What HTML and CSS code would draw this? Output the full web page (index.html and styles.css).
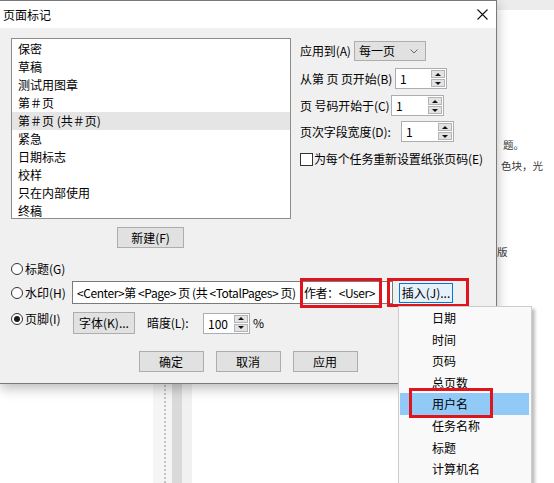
FILE: index.html
```html
<!DOCTYPE html>
<html lang="zh-CN">
<head>
<meta charset="utf-8">
<title>页面标记</title>
<link rel="stylesheet" href="styles.css">
</head>
<body>
<div class="desk">
  <div class="doc">
    <div class="doc-gap"></div>
    <div class="ruler"><span class="ru-a"></span><span class="ru-dots"></span><span class="ru-b"></span><span class="ru-c"></span><span class="ru-d"></span></div>
    <div class="doc-fill"></div>
    <div class="doc-edge">
      <div class="doc-band"></div>
      <p class="doc-line l1">题。</p>
      <p class="doc-line l2">色块，光</p>
      <p class="doc-line l3">版</p>
    </div>
  </div>

  <section class="dialog">
    <header class="titlebar">
      <h1 class="title">页面标记</h1>
      <svg class="close" width="11" height="11" viewBox="0 0 11 11"><path d="M0.5 0.5L10.5 10.5M10.5 0.5L0.5 10.5" stroke="#111" stroke-width="1.1" fill="none"/></svg>
    </header>
    <div class="dlg-body">
      <div class="upper">
        <div class="list-col">
          <ul class="listbox">
            <li>保密</li>
            <li>草稿</li>
            <li>测试用图章</li>
            <li>第＃页</li>
            <li class="sel">第＃页 (共＃页)</li>
            <li>紧急</li>
            <li>日期标志</li>
            <li>校样</li>
            <li>只在内部使用</li>
            <li>终稿</li>
          </ul>
          <button class="btn btn-new">新建(F)</button>
        </div>
        <div class="settings">
          <div class="field f-apply">
            <span class="lab">应用到(A)</span>
            <div class="combo"><span>每一页</span><svg width="8" height="5" viewBox="0 0 8 5"><path d="M0.5 0.5L4 4L7.5 0.5" stroke="#666" fill="none"/></svg></div>
          </div>
          <div class="field f-from">
            <span class="lab">从第 页 页开始(B)</span>
            <div class="spin"><span class="spin-val">1</span><span class="spin-btns"><i class="up"></i><i class="down"></i></span></div>
          </div>
          <div class="field f-num">
            <span class="lab">页 号码开始于(C)</span>
            <div class="spin"><span class="spin-val">1</span><span class="spin-btns"><i class="up"></i><i class="down"></i></span></div>
          </div>
          <div class="field f-width">
            <span class="lab">页次字段宽度(D):</span>
            <div class="spin"><span class="spin-val">1</span><span class="spin-btns"><i class="up"></i><i class="down"></i></span></div>
          </div>
          <label class="check-row"><span class="checkbox"></span>为每个任务重新设置纸张页码(E)</label>
        </div>
      </div>

      <div class="mode">
        <div class="mode-row m-title">
          <span class="radio-lab"><i class="radio"></i>标题(G)</span>
        </div>
        <div class="mode-row m-mark">
          <span class="radio-lab"><i class="radio"></i>水印(H)</span>
          <div class="textbox">&lt;Center&gt;第 &lt;Page&gt; 页 (共 &lt;TotalPages&gt; 页) <span class="hl hl-text">作者：&lt;User&gt;</span></div>
          <button class="btn btn-insert hl">插入(J)...</button>
        </div>
        <div class="mode-row m-foot">
          <span class="radio-lab"><i class="radio on"></i>页脚(I)</span>
          <button class="btn btn-font">字体(K)...</button>
          <span class="lab lab-dark">暗度(L):</span>
          <div class="spin spin-dark"><span class="spin-val">100</span><span class="spin-btns"><i class="up"></i><i class="down"></i></span></div>
          <span class="pct">%</span>
        </div>
      </div>

      <div class="actions">
        <button class="btn">确定</button>
        <button class="btn">取消</button>
        <button class="btn">应用</button>
      </div>
    </div>
  </section>

  <ul class="menu">
    <li>日期</li>
    <li>时间</li>
    <li>页码</li>
    <li>总页数</li>
    <li class="hot hl">用户名</li>
    <li>任务名称</li>
    <li>标题</li>
    <li>计算机名</li>
  </ul>
</div>
</body>
</html>
```

FILE: styles.css
```css
* { box-sizing: border-box; margin: 0; padding: 0; }

html, body {
  width: 554px;
  height: 483px;
  overflow: hidden;
}

body {
  font-family: "Noto Sans CJK SC", "Noto Sans", sans-serif;
  font-size: 12px;
  line-height: 18px;
  color: #000;
  background: #fff;
}

.desk {
  position: relative;
  width: 554px;
  height: 483px;
  overflow: hidden;
}

/* ---------- background document ---------- */
.doc {
  position: absolute;
  inset: 0;
  display: flex;
}
.doc-gap { width: 153px; }
.ruler { width: 39px; display: flex; }
.ru-a { width: 11px; background: #f5f5f5; }
.ru-dots { width: 2px; background: #f5f5f5; border-left: 2px dotted #c4c4c4; }
.ru-b { width: 6px; background: #f5f5f5; }
.ru-c { width: 10px; background: #dadada; }
.ru-d { width: 10px; background: #f1f1f1; }
.doc-fill { flex: 1; }
.doc-edge {
  width: 57px;
  font-size: 10.5px;
  color: #3a3a3a;
}
.doc-band { height: 10px; background: #ececec; }
.doc-line { line-height: 16px; white-space: nowrap; }
.l1 { margin-top: 127px; padding-left: 6px; }
.l2 { margin-top: 5px; padding-left: 4px; }
.l3 { margin-top: 70px; padding-left: 0; }

/* ---------- dialog ---------- */
.dialog {
  position: absolute;
  left: 0;
  top: 0;
  width: 497px;
  height: 384px;
  border: 1px solid #7a7a7a;
  border-left: 0;
  background: #f0f0f0;
  box-shadow: 0 4px 12px rgba(0, 0, 0, 0.28);
  display: flex;
  flex-direction: column;
}

.titlebar {
  height: 27px;
  background: #fff;
  display: flex;
  align-items: center;
  justify-content: space-between;
  padding: 0 8px 0 3px;
}
.title { font-size: 12px; font-weight: normal; line-height: 18px; }

.dlg-body {
  flex: 1;
  padding-top: 10px;
}

.upper {
  display: flex;
  padding-left: 11px;
  height: 210px;
}

.list-col {
  width: 280px;
  display: flex;
  flex-direction: column;
  align-items: center;
}

.listbox {
  list-style: none;
  width: 280px;
  height: 181px;
  background: #fff;
  border: 1px solid #8c8c8c;
  padding-top: 1px;
}
.listbox li {
  height: 18px;
  line-height: 18px;
  padding-left: 6px;
  white-space: nowrap;
}
.listbox li.sel { background: #e5e5e5; }

.btn {
  font: inherit;
  font-size: 12px;
  line-height: 18px;
  color: #000;
  background: #e1e1e1;
  border: 1px solid #adadad;
  display: flex;
  align-items: center;
  justify-content: center;
  white-space: nowrap;
}
.btn-new { width: 67px; height: 21px; margin-top: 8px; margin-left: -1px; }

.settings {
  margin-left: 9px;
  display: flex;
  flex-direction: column;
}
.field { display: flex; align-items: center; }
.lab { white-space: nowrap; letter-spacing: -0.1px; }
.f-apply { margin-top: 3px; height: 20px; }
.f-apply .lab { width: 54px; }
.f-from { margin-top: 7px; height: 21px; }
.f-from .lab { width: 95px; }
.f-num { margin-top: 6px; height: 21px; }
.f-num .lab { width: 91px; }
.f-width { margin-top: 5px; height: 21px; }
.f-width .lab { width: 101px; }

.combo {
  width: 72px;
  height: 20px;
  background: #e1e1e1;
  border: 1px solid #adadad;
  display: flex;
  align-items: center;
  justify-content: space-between;
  padding: 0 7px 0 4px;
}

.spin {
  width: 53px;
  height: 21px;
  background: #fff;
  border: 1px solid #abadb3;
  display: flex;
}
.f-from .spin { width: 52px; }
.spin-val { flex: 1; padding-left: 4px; line-height: 19px; }
.spin-btns {
  width: 14px;
  margin: 1px 1px 1px 0;
  display: flex;
  flex-direction: column;
  gap: 1px;
}
.spin-btns i {
  flex: 1;
  background: #e3e3e3;
  border: 1px solid #b4b4b4;
  display: flex;
  align-items: center;
  justify-content: center;
}
.spin-btns i::before {
  content: "";
  border-left: 3px solid transparent;
  border-right: 3px solid transparent;
}
.spin-btns .up::before { border-bottom: 3px solid #111; }
.spin-btns .down::before { border-top: 3px solid #111; }

.check-row {
  margin-top: 9px;
  height: 16px;
  display: flex;
  align-items: center;
  gap: 1px;
  white-space: nowrap;
  letter-spacing: -0.15px;
}
.checkbox {
  width: 13px;
  height: 13px;
  border: 1px solid #333;
  background: #fff;
}

/* ---------- mode radios ---------- */
.mode {
  margin-top: 12px;
  padding-left: 11px;
  display: flex;
  flex-direction: column;
}
.mode-row { display: flex; align-items: center; }
.m-title { height: 18px; }
.m-mark { margin-top: 3px; height: 23px; }
.m-foot { margin-top: 8px; height: 22px; }

.radio-lab {
  width: 61px;
  height: 16px;
  display: flex;
  align-items: center;
  gap: 2px;
  white-space: nowrap;
}
.m-foot .radio-lab { align-self: flex-start; margin-top: -1px; }
.radio {
  width: 12px;
  height: 12px;
  border: 1px solid #333;
  border-radius: 50%;
  background: #fff;
  display: flex;
  align-items: center;
  justify-content: center;
}
.radio.on::before {
  content: "";
  width: 6px;
  height: 6px;
  border-radius: 50%;
  background: #1a1a1a;
}

.textbox {
  width: 321px;
  height: 23px;
  background: #fff;
  border: 1px solid #7a7a7a;
  padding-left: 4px;
  line-height: 21px;
  white-space: nowrap;
  letter-spacing: -0.42px;
}

.hl { position: relative; }
.hl::after {
  content: "";
  position: absolute;
  border: 3px solid #e0141c;
  pointer-events: none;
}
.hl-text { display: inline-block; line-height: 21px; margin-left: 6px; }
.hl-text::after { left: -4px; right: -7px; top: -4px; bottom: -5px; }

.btn-insert {
  width: 54px;
  height: 20px;
  margin-left: 6px;
  background: #e5f1fb;
  border-color: #0078d7;
}
.btn-insert::after { left: -13px; right: -17px; top: -6px; bottom: -5px; }

.btn-font { width: 62px; height: 22px; margin-left: 1px; }
.lab-dark { width: 56px; margin-left: 12px; }
.spin-dark { width: 47px; height: 21px; }
.pct { margin-left: 3px; }

/* ---------- action buttons ---------- */
.actions {
  margin-top: 17px;
  display: flex;
  justify-content: center;
  gap: 12px;
}
.actions .btn { width: 65px; height: 21px; }

/* ---------- insert menu ---------- */
.menu {
  position: absolute;
  left: 398px;
  top: 306px;
  width: 134px;
  height: 190px;
  list-style: none;
  background: #f9f9f9;
  border: 1px solid #cccccc;
  box-shadow: 3px 3px 3px rgba(0, 0, 0, 0.25);
}
.menu li {
  height: 21.6px;
  line-height: 21.6px;
  margin: 0 2px 0 1px;
  padding-left: 32px;
  white-space: nowrap;
}
.menu li.hot { background: #91c9f7; }
.menu li.hot::after { left: 9px; right: 36px; top: -5px; bottom: -3px; }
```
